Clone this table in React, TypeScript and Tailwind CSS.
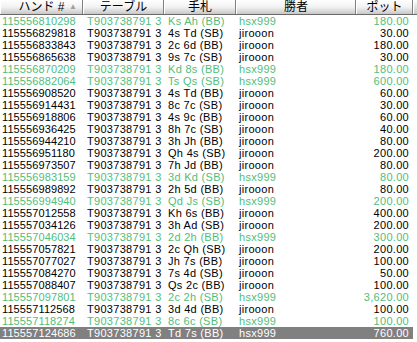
const rows: [string, string, string, string, string, boolean][] = [
  ['115556810298', 'Ks Ah', 'BB', 'hsx999', '180.00', true],
  ['115556829818', '4s Td', 'SB', 'jirooon', '30.00', false],
  ['115556833843', '2c 6d', 'BB', 'jirooon', '180.00', false],
  ['115556865638', '9s 7c', 'SB', 'jirooon', '30.00', false],
  ['115556870209', 'Kd 8s', 'BB', 'hsx999', '180.00', true],
  ['115556882064', 'Ts Qs', 'SB', 'hsx999', '600.00', true],
  ['115556908520', '4s Td', 'BB', 'jirooon', '60.00', false],
  ['115556914431', '8c 7c', 'SB', 'jirooon', '30.00', false],
  ['115556918806', '4s 9c', 'BB', 'jirooon', '60.00', false],
  ['115556936425', '8h 7c', 'SB', 'jirooon', '40.00', false],
  ['115556944210', '3h Jh', 'BB', 'jirooon', '80.00', false],
  ['115556951180', 'Qh 4s', 'SB', 'jirooon', '200.00', false],
  ['115556973507', '7h Jd', 'BB', 'jirooon', '80.00', false],
  ['115556983159', '3d Kd', 'SB', 'hsx999', '80.00', true],
  ['115556989892', '2h 5d', 'BB', 'jirooon', '80.00', false],
  ['115556994940', 'Qd Js', 'SB', 'hsx999', '200.00', true],
  ['115557012558', 'Kh 6s', 'BB', 'jirooon', '400.00', false],
  ['115557034126', '3h Ad', 'SB', 'jirooon', '200.00', false],
  ['115557046034', '2d 2h', 'BB', 'hsx999', '300.00', true],
  ['115557057821', '2c Qh', 'SB', 'jirooon', '200.00', false],
  ['115557077027', 'Jh 7s', 'BB', 'jirooon', '100.00', false],
  ['115557084270', '7s 4d', 'SB', 'jirooon', '50.00', false],
  ['115557088407', 'Qs 2c', 'BB', 'jirooon', '100.00', false],
  ['115557097801', '2c 2h', 'SB', 'hsx999', '3,620.00', true],
  ['115557112568', '3d 4d', 'BB', 'jirooon', '100.00', false],
  ['115557118274', '8c 6c', 'SB', 'hsx999', '100.00', true],
  ['115557124686', 'Td 7s', 'BB', 'hsx999', '760.00', true],
];

const cols = ['w-[83px]', 'w-[81px]', 'w-[72px]', 'w-[120px]', 'w-[57px]'];

function HeaderCell({ label, width, sort = false }: { label: string; width: string; sort?: boolean }) {
  return (
    <div
      className={`${width} relative flex h-full items-center justify-center border-r border-r-[#808080] border-l border-l-white bg-gradient-to-b from-white via-[#f2f2f2] to-[#c8c8c8]`}
    >
      <span className="text-[12px] leading-none text-black">{label}</span>
      {sort && <span className="absolute right-[5px] top-[3px] text-[8px] leading-none text-[#a0a0a0]">▲</span>}
    </div>
  );
}

export default function App() {
  return (
    <div
      className="h-[342px] w-[417px] overflow-hidden bg-white"
      style={{ fontFamily: '"Liberation Sans", "Noto Sans CJK JP", sans-serif' }}
    >
      <div className="flex h-[15px] border-b border-b-[#6a6a6a] bg-gradient-to-b from-white to-[#c8c8c8]">
        <HeaderCell label="ハンド #" width={cols[0]} sort />
        <HeaderCell label="テーブル" width={cols[1]} />
        <HeaderCell label="手札" width={cols[2]} />
        <HeaderCell label="勝者" width={cols[3]} />
        <HeaderCell label="ポット" width={cols[4]} />
        <div className="flex-1 border-l border-l-white" />
      </div>
      <div className="flex flex-col">
        {rows.map(([hand, cards, pos, winner, pot, hsx], i) => {
          const selected = i === rows.length - 1;
          const tone = selected ? 'bg-[#808080] text-white' : hsx ? 'text-[#52bd7a]' : 'text-black';
          return (
            <div
              key={hand}
              className={`flex h-[12px] w-[413px] whitespace-nowrap text-[11px] leading-[12px] ${tone}`}
            >
              <div className={`${cols[0]} shrink-0 overflow-hidden pl-[2px] tracking-[0.1px]`}>{hand}</div>
              <div className={`${cols[1]} shrink-0 overflow-hidden pl-[4px] tracking-[0.3px]`}>T903738791 3</div>
              <div className={`${cols[2]} shrink-0 overflow-hidden whitespace-pre pl-[4px] tracking-[0.3px]`}>{`${cards} (${pos})`}</div>
              <div className={`${cols[3]} shrink-0 pl-[3px] tracking-[0.3px]`}>{winner}</div>
              <div className={`${cols[4]} shrink-0 pr-[4px] text-right tracking-[0.3px]`}>{pot}</div>
            </div>
          );
        })}
      </div>
    </div>
  );
}
